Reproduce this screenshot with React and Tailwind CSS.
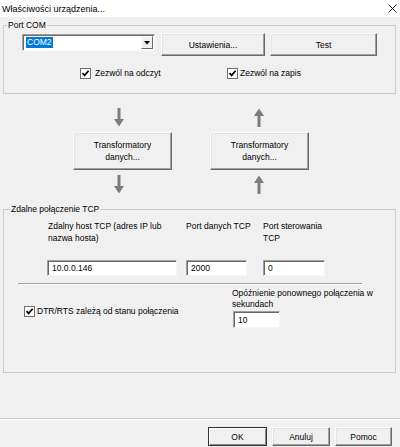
import React from "react";

function Check({ className = "" }) {
  return (
    <div className={`w-[11px] h-[11px] bg-white border border-[#6f6f6f] flex items-center justify-center shrink-0 ${className}`}>
      <svg width="9" height="9" viewBox="0 0 9 9">
        <path d="M1.5 4.2 L3.6 6.4 L7.6 1.8" stroke="#000" strokeWidth="1.7" fill="none" />
      </svg>
    </div>
  );
}

function Btn({ className = "", children, def = false }) {
  return (
    <div
      className={
        def
          ? `flex flex-col items-center justify-center text-center bg-[#f0f0f0] border border-[#333333] shadow-[inset_1px_1px_0_#ffffff,inset_-1px_-1px_0_#8a8a8a] shrink-0 ${className}`
          : `flex flex-col items-center justify-center text-center bg-[#f0f0f0] border border-t-[#fbfbfb] border-l-[#fbfbfb] border-r-[#696969] border-b-[#696969] shadow-[inset_-1px_-1px_0_#a0a0a0,inset_1px_1px_0_#e3e3e3] shrink-0 ${className}`
      }
    >
      {children}
    </div>
  );
}

function Field({ className = "", children }) {
  return (
    <div
      className={`bg-white border border-t-[#a0a0a0] border-l-[#a0a0a0] border-r-[#f7f7f7] border-b-[#f7f7f7] shadow-[inset_1px_1px_0_#696969] flex items-center pl-[4px] shrink-0 ${className}`}
    >
      {children}
    </div>
  );
}

function DownArrow({ className = "" }) {
  return (
    <svg width="10" height="19" viewBox="0 0 10 19" className={`shrink-0 ${className}`}>
      <rect x="3.5" y="0" width="3" height="12" fill="#7c7c7c" />
      <path d="M0 11 L10 11 L5 18.5 Z" fill="#7c7c7c" />
    </svg>
  );
}

function UpArrow({ className = "" }) {
  return (
    <svg width="10" height="19" viewBox="0 0 10 19" className={`shrink-0 ${className}`}>
      <rect x="3.5" y="7" width="3" height="12" fill="#7c7c7c" />
      <path d="M0 8 L10 8 L5 0.5 Z" fill="#7c7c7c" />
    </svg>
  );
}

export default function App() {
  return (
    <div className="w-[400px] h-[447px] bg-[#f0f0f0] text-black text-[8.5px] leading-[12px] font-['Liberation_Sans',Arial,sans-serif] flex flex-col overflow-hidden">
      {/* Title bar */}
      <div className="h-[17px] bg-white flex items-center justify-between pl-[2px] pr-[3px] shrink-0">
        <span className="text-[9px]">Właściwości urządzenia...</span>
        <svg width="9" height="9" viewBox="0 0 9 9">
          <path d="M0.5 0.5 L8.5 8.5 M8.5 0.5 L0.5 8.5" stroke="#222" strokeWidth="1" />
        </svg>
      </div>

      {/* Port COM group */}
      <div className="relative ml-[3px] mr-[4px] mt-[8px] h-[69px] border border-[#cccccc] shrink-0">
        <span className="absolute -top-[7px] left-[3px] px-[1px] bg-[#f0f0f0] leading-[12px]">Port COM</span>
        <div className="flex items-start pt-[7px] pl-[18px]">
          <Field className="mt-[1px] w-[133px] h-[17px] !pl-[3px]">
            <span className="bg-[#0078d7] text-white px-[1px] leading-[11px]">COM2</span>
            <div className="flex-1" />
            <div className="w-[12px] h-[13px] mr-[1px] flex items-center justify-center bg-[#f0f0f0] border border-t-[#fbfbfb] border-l-[#fbfbfb] border-r-[#696969] border-b-[#696969]">
              <svg width="6" height="4" viewBox="0 0 6 4">
                <path d="M0 0 L6 0 L3 3.5 Z" fill="#000" />
              </svg>
            </div>
          </Field>
          <Btn className="ml-[6px] w-[104px] h-[23px]">Ustawienia...</Btn>
          <Btn className="ml-[5px] w-[107px] h-[23px]">Test</Btn>
        </div>
        <div className="flex items-center mt-[11px] pl-[76px]">
          <div className="flex items-center w-[147px]">
            <Check />
            <span className="ml-[4px]">Zezwól na odczyt</span>
          </div>
          <div className="flex items-center">
            <Check />
            <span className="ml-[2px]">Zezwól na zapis</span>
          </div>
        </div>
      </div>

      {/* Transformers */}
      <div className="flex mt-[14px] pl-[73px] shrink-0">
        <div className="w-[99px] flex flex-col">
          <DownArrow className="ml-[41px]" />
          <Btn className="mt-[5px] h-[38px] w-[99px]">
            <span>Transformatory</span>
            <span>danych...</span>
          </Btn>
          <DownArrow className="ml-[41px] mt-[5px]" />
        </div>
        <div className="w-[99px] ml-[38px] flex flex-col">
          <UpArrow className="ml-[44px]" />
          <Btn className="mt-[5px] h-[38px] w-[99px]">
            <span>Transformatory</span>
            <span>danych...</span>
          </Btn>
          <UpArrow className="ml-[44px] mt-[5px]" />
        </div>
      </div>

      {/* TCP group */}
      <div className="relative ml-[3px] mr-[4px] mt-[15px] h-[164px] border border-[#cccccc] shrink-0">
        <span className="absolute -top-[7px] left-[6px] px-[1px] bg-[#f0f0f0] leading-[12px]">Zdalne połączenie TCP</span>
        <div className="flex pt-[10px] pl-[44px] h-[34px]">
          <div className="w-[138px]">
            Zdalny host TCP (adres IP lub
            <br />
            nazwa hosta)
          </div>
          <div className="w-[77px]">Port danych TCP</div>
          <div>
            Port sterowania
            <br />
            TCP
          </div>
        </div>
        <div className="flex mt-[16px] pl-[43px]">
          <Field className="w-[130px] h-[16px]">10.0.0.146</Field>
          <Field className="ml-[9px] w-[61px] h-[16px]">2000</Field>
          <Field className="ml-[16px] w-[62px] h-[16px]">0</Field>
        </div>
        <div className="mt-[7px] ml-[14px] w-[344px] h-[2px] border-t border-t-[#a0a0a0] border-b border-b-white" />
        <div className="flex">
          <div className="w-[228px] pl-[20px] pt-[21px] flex items-start">
            <Check />
            <span className="ml-[2px] -mt-[1px]">DTR/RTS zależą od stanu połączenia</span>
          </div>
          <div className="flex flex-col pt-[3px]">
            <div className="leading-[11px]">
              Opóźnienie ponownego połączenia w
              <br />
              sekundach
            </div>
            <Field className="mt-[1px] ml-[1px] w-[47px] h-[17px]">10</Field>
          </div>
        </div>
      </div>

      {/* bottom separator */}
      <div className="mt-[45px] h-[2px] border-t border-t-[#c8c8c8] border-b border-b-white shrink-0" />

      {/* buttons */}
      <div className="flex justify-end pr-[8px] mt-[7px] shrink-0">
        <Btn def className="w-[59px] h-[19px]">OK</Btn>
        <Btn className="ml-[5px] w-[58px] h-[19px]">Anuluj</Btn>
        <Btn className="ml-[5px] w-[57px] h-[19px]">Pomoc</Btn>
      </div>
    </div>
  );
}
